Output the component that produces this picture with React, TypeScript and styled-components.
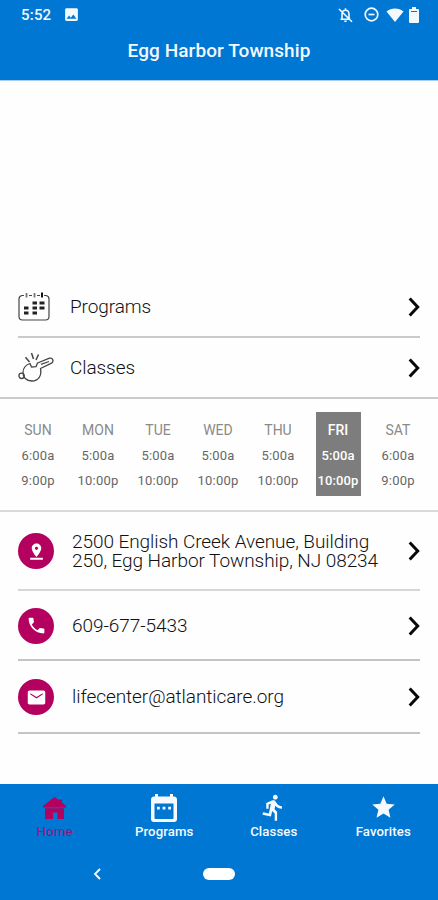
import React from 'react';
import styled, { createGlobalStyle } from 'styled-components';

const BLUE = '#0077d2';
const MAGENTA = '#b4005f';

const GlobalStyle = createGlobalStyle`
  * { box-sizing: border-box; }
  body { margin: 0; background: #fff; font-family: Roboto, "Liberation Sans", sans-serif; }
  svg { display: block; flex: none; }
`;

const Screen = styled.div`
  width: 438px;
  height: 900px;
  display: flex;
  flex-direction: column;
  background: #fefefe;
  overflow: hidden;
`;

const Header = styled.header`
  height: 81px;
  flex: none;
  background: ${BLUE};
  border-bottom: 1px solid #a9cdf0;
  color: #f3f9ff;
`;

const StatusBar = styled.div`
  height: 29px;
  display: flex;
  align-items: center;
  padding: 0 18px 0 21px;
`;

const Clock = styled.span`
  font-size: 15px;
  font-weight: 500;
  letter-spacing: 0.2px;
  width: 42px;
`;

const StatusIcons = styled.div`
  display: flex;
  align-items: center;
  margin-left: auto;
`;

const Title = styled.h1`
  margin: 0;
  height: 44px;
  line-height: 44px;
  text-align: center;
  font-size: 19px;
  font-weight: 500;
  letter-spacing: 0.08px;
`;

const Hero = styled.div`
  height: 195px;
  flex: none;
`;

const Row = styled.button<{ $h: number; $full?: boolean; $gap: number; $line?: string }>`
  height: ${(p) => p.$h}px;
  flex: none;
  display: flex;
  align-items: center;
  margin: 0 ${(p) => (p.$full ? 0 : 18)}px;
  padding: 1px ${(p) => (p.$full ? 18 : 0)}px 0;
  border: 0;
  border-bottom: 2px solid ${(p) => p.$line ?? '#cacaca'};
  background: none;
  text-align: left;
  font-family: inherit;
  color: #111;
  gap: ${(p) => p.$gap}px;
`;

const RowIcon = styled.span`
  width: 36px;
  display: flex;
`;

const Badge = styled.span`
  width: 36px;
  height: 36px;
  flex: none;
  border-radius: 50%;
  background: ${MAGENTA};
  color: #fff;
  display: flex;
  align-items: center;
  justify-content: center;
`;

const RowLabel = styled.span<{ $spacing?: number }>`
  flex: 1;
  padding-top: 1px;
  white-space: nowrap;
  font-size: 19px;
  font-weight: 300;
  line-height: 18.5px;
  letter-spacing: ${(p) => p.$spacing ?? -0.07}px;
`;

const AddressLine = styled.span`
  display: block;
`;

const Schedule = styled.section`
  height: 113px;
  flex: none;
  display: grid;
  grid-template-columns: repeat(7, 60px);
  justify-items: center;
  padding: 13px 10px 0 8px;
  border-bottom: 2px solid #d9d9d9;
`;

const Day = styled.div<{ $active: boolean }>`
  width: 45px;
  height: 84px;
  display: flex;
  flex-direction: column;
  align-items: center;
  padding-top: 5px;
  background: ${(p) => (p.$active ? '#7d7d7d' : 'transparent')};
  color: ${(p) => (p.$active ? '#fff' : '#666')};
`;

const DayName = styled.span<{ $active: boolean }>`
  font-size: 14px;
  line-height: 26px;
  font-weight: ${(p) => (p.$active ? 500 : 400)};
  color: ${(p) => (p.$active ? '#fff' : '#8a8a8a')};
`;

const Hours = styled.span<{ $active: boolean }>`
  font-size: 13px;
  line-height: 25px;
  letter-spacing: ${(p) => (p.$active ? 0.1 : 0.2)}px;
  font-weight: ${(p) => (p.$active ? 500 : 400)};
`;

const Spacer = styled.div`
  flex: 1;
`;

const Footer = styled.footer`
  height: 116px;
  flex: none;
  background: ${BLUE};
`;

const Tabs = styled.nav`
  height: 62px;
  display: grid;
  grid-template-columns: repeat(4, 1fr);
`;

const Tab = styled.button<{ $active?: boolean }>`
  border: 0;
  padding: 8px 0 0;
  background: none;
  font-family: inherit;
  font-size: 13.2px;
  font-weight: ${(p) => (p.$active ? 400 : 500)};
  letter-spacing: ${(p) => (p.$active ? 0.2 : 0.1)}px;
  line-height: 18px;
  display: flex;
  flex-direction: column;
  align-items: center;
  color: ${(p) => (p.$active ? MAGENTA : '#f6faff')};
`;

const TabLabel = styled.span<{ $dim?: boolean }>`
  opacity: ${(p) => (p.$dim ? 0.8 : 1)};
`;

const TabIcon = styled.span`
  height: 31px;
  display: flex;
  align-items: center;
`;

const SystemNav = styled.div`
  height: 56px;
  display: grid;
  grid-template-columns: 194px 50px 194px;
  align-items: center;
  justify-items: center;
`;

const HomePill = styled.span`
  width: 32px;
  height: 12px;
  border-radius: 6px;
  background: #fff;
`;

const Material = ({ d, size = 24 }: { d: string; size?: number }) => (
  <svg width={size} height={size} viewBox="0 0 24 24" fill="currentColor">
    <path d={d} />
  </svg>
);

const paths = {
  image: 'M21 19V5c0-1.100-.9-2-2-2H5c-1.100 0-2 .9-2 2v14c0 1.100.9 2 2 2h14c1.100 0 2-.9 2-2zM8.500 13.500l2.500 3.010L14.500 12l4.500 6H5l3.500-4.500z',
  pin: 'M18 8c0-3.310-2.690-6-6-6S6 4.690 6 8c0 4.500 6 11 6 11s6-6.500 6-11zm-8 0c0-1.100.9-2 2-2s2 .9 2 2-.89 2-2 2c-1.100 0-2-.9-2-2zM4 20v2.300h16V20H4z',
  phone: 'M6.620 10.790c1.440 2.830 3.760 5.140 6.590 6.590l2.200-2.200c.27-.27.67-.36 1.020-.24 1.120.37 2.330.57 3.570.57.55 0 1 .45 1 1V20c0 .55-.45 1-1 1-9.390 0-17-7.610-17-17 0-.55.45-1 1-1h3.500c.55 0 1 .45 1 1 0 1.250.2 2.450.57 3.570.11.35.03.74-.25 1.020l-2.200 2.200z',
  mail: 'M20 4H4c-1.100 0-1.990.9-1.990 2L2 18c0 1.100.9 2 2 2h16c1.100 0 2-.9 2-2V6c0-1.100-.9-2-2-2zm-1 4.500l-7 4.500-7-4.500V7l7 4.500L19 7v1.500z',
  run: 'M13.490 5.480c1.100 0 2-.9 2-2s-.9-2-2-2-2 .9-2 2 .9 2 2 2zm-3.600 13.900l1-4.400 2.100 2v6h2v-7.500l-2.100-2 .6-3c1.300 1.500 3.300 2.500 5.500 2.500v-2c-1.900 0-3.500-1-4.300-2.400l-1-1.600c-.4-.6-1-1-1.700-1-.3 0-.5.1-.8.1l-5.200 2.200v4.700h2v-3.400l1.800-.7-1.600 8.100-4.900-1-.4 2 7 1.400z',
  star: 'M12 17.270L18.180 21l-1.640-7.030L22 9.240l-7.190-.61L12 2 9.190 8.630 2 9.240l5.460 4.730L5.820 21z',
};

const Chevron = () => (
  <svg width="12" height="20" viewBox="0 0 12 20" fill="none" stroke="#080808" strokeWidth="3">
    <path d="M1.700 1.500L9.700 10L1.700 18.500" />
  </svg>
);

const BellOff = () => (
  <svg width="15" height="16" viewBox="0 0 15 16" fill="none" stroke="currentColor" strokeWidth="1.600">
    <path d="M4 12V7.200c0-2.500 1.400-3.900 3.500-3.900S11 4.700 11 7.200V12M2.500 12.300h10M7.500 1.200v2M6.300 14.300h2.400M1 2l13 12.800" />
  </svg>
);

const DoNotDisturb = () => (
  <svg width="15" height="15" viewBox="0 0 15 15" fill="none" stroke="currentColor" strokeWidth="1.700">
    <circle cx="7.500" cy="7.500" r="6.300" />
    <path d="M4.500 7.500h6" />
  </svg>
);

const Wifi = () => (
  <svg width="18" height="14" viewBox="0 0 18 14" fill="currentColor">
    <path d="M9 14L.5 3.500C5-.4 13-.4 17.500 3.500z" />
  </svg>
);

const Battery = () => (
  <svg width="10" height="16" viewBox="0 0 10 16" fill="currentColor">
    <path fillRule="evenodd" d="M3 0h4v2h2q1 0 1 1v12q0 1-1 1H1q-1 0-1-1V3q0-1 1-1h2zM2 4v1h6V4z" />
  </svg>
);

const OutlineCalendar = () => (
  <svg width="32" height="29" viewBox="0 0 32 29" fill="none" stroke="#444" strokeWidth="1.200">
    <path d="M6 3.500H4Q1 4 1 7v17.500q0 3.500 3.500 3.500h23q3.500 0 3.500-3.500V7q0-3-3-3.500h-2M11 3.500h3M19 3.500h3" />
    <path d="M8.500 1v4.500M16.500 1v4.500" strokeWidth="1.800" stroke="#777" />
    <path d="M24 .5v5" stroke="#111" strokeWidth="2" />
    <path d="M14.500 11h4.500M21.500 11h5M6 16h4.500M14.500 16h4.500M21.500 16h5M6 21h4.500M14.500 21h4.500" stroke="#222" strokeWidth="3" />
  </svg>
);

const Whistle = () => (
  <svg width="36" height="30" viewBox="0 0 36 30" fill="none" stroke="#444" strokeWidth="1.300" strokeLinejoin="round">
    <path d="M12 10.500L13.500 14l4.500-.3 1.500-3.700L31.500 5.200q3-.5 3.500 2.500 0 2-2 2.600L22.500 15.500c1.500 7.500-2.500 12.500-8.500 12.500S5 24 5 19.500c0-3.500 2.500-7.500 7-9z" />
    <path d="M23 11.300l8-2.800" />
    <circle cx="3.600" cy="22.800" r="2.700" />
    <path d="M7.500 4.200l4 4.800M13.500 0l2 6M20.500 1.500L18 7" strokeWidth="1.500" />
  </svg>
);

const HomeIcon = () => (
  <svg width="23" height="22" viewBox="0 0 23 22" fill="currentColor">
    <path d="M11.500 0l4.500 3.300V2.500h3v3L23 9v1.500H0V9z" />
    <path d="M2 11.300h19V22h-6.500v-6.500h-4.500V22H2z" />
  </svg>
);

const SolidCalendar = () => (
  <svg width="26" height="28" viewBox="0 0 26 28" fill="currentColor">
    <path fillRule="evenodd" d="M4 0h3v2.500h12V0h3v2.500h1q3 .3 3 3V25q0 3-3 3H3q-3 0-3-3V5.500q0-2.700 3-3h1zM3.500 9.500V24q0 1 1 1h17q1 0 1-1V9.500z" />
    <path d="M6 12.800h2.800v2.800H6zM11.600 12.800h2.800v2.800h-2.800zM17.200 12.800H20v2.800h-2.800z" />
  </svg>
);

const BackIcon = () => (
  <svg width="8" height="12" viewBox="0 0 8 12" fill="none" stroke="#f6faff" strokeWidth="1.900">
    <path d="M7 1L2 6l5 5" />
  </svg>
);

const week = [
  ['SUN', '6:00a', '9:00p'],
  ['MON', '5:00a', '10:00p'],
  ['TUE', '5:00a', '10:00p'],
  ['WED', '5:00a', '10:00p'],
  ['THU', '5:00a', '10:00p'],
  ['FRI', '5:00a', '10:00p'],
  ['SAT', '6:00a', '9:00p'],
];

const StatusGap = styled.span<{ $w: number }>`
  width: ${(p) => p.$w}px;
`;

export default function App() {
  return (
    <Screen>
      <GlobalStyle />
      <Header>
        <StatusBar>
          <Clock>5:52</Clock>
          <Material d={paths.image} size={17} />
          <StatusIcons>
            <BellOff />
            <StatusGap $w={11} />
            <DoNotDisturb />
            <StatusGap $w={7} />
            <Wifi />
            <StatusGap $w={5} />
            <Battery />
            <StatusGap $w={1} />
          </StatusIcons>
        </StatusBar>
        <Title>Egg Harbor Township</Title>
      </Header>
      <Hero />
      <Row $h={62} $gap={16}>
        <RowIcon><OutlineCalendar /></RowIcon>
        <RowLabel $spacing={-0.08}>Programs</RowLabel>
        <Chevron />
      </Row>
      <Row $h={61} $gap={16} $full>
        <RowIcon><Whistle /></RowIcon>
        <RowLabel $spacing={-0.08}>Classes</RowLabel>
        <Chevron />
      </Row>
      <Schedule>
        {week.map(([name, open, close]) => {
          const active = name === 'FRI';
          return (
            <Day key={name} $active={active}>
              <DayName $active={active}>{name}</DayName>
              <Hours $active={active}>{open}</Hours>
              <Hours $active={active}>{close}</Hours>
            </Day>
          );
        })}
      </Schedule>
      <Row $h={79} $gap={18} $line="#d6d6d6">
        <Badge><Material d={paths.pin} size={19} /></Badge>
        <RowLabel>
          <AddressLine>2500 English Creek Avenue, Building</AddressLine>
          <AddressLine>250, Egg Harbor Township, NJ 08234</AddressLine>
        </RowLabel>
        <Chevron />
      </Row>
      <Row $h={70} $gap={18} $line="#c4c4c4">
        <Badge><Material d={paths.phone} size={21} /></Badge>
        <RowLabel>609-677-5433</RowLabel>
        <Chevron />
      </Row>
      <Row $h={73} $gap={18} $line="#c4c4c4">
        <Badge><Material d={paths.mail} size={21} /></Badge>
        <RowLabel>lifecenter@atlanticare.org</RowLabel>
        <Chevron />
      </Row>
      <Spacer />
      <Footer>
        <Tabs>
          <Tab $active><TabIcon><HomeIcon /></TabIcon><TabLabel $dim>Home</TabLabel></Tab>
          <Tab><TabIcon><SolidCalendar /></TabIcon><TabLabel>Programs</TabLabel></Tab>
          <Tab><TabIcon><Material d={paths.run} size={29} /></TabIcon><TabLabel>Classes</TabLabel></Tab>
          <Tab><TabIcon><Material d={paths.star} size={27} /></TabIcon><TabLabel>Favorites</TabLabel></Tab>
        </Tabs>
        <SystemNav>
          <BackIcon />
          <HomePill />
        </SystemNav>
      </Footer>
    </Screen>
  );
}
